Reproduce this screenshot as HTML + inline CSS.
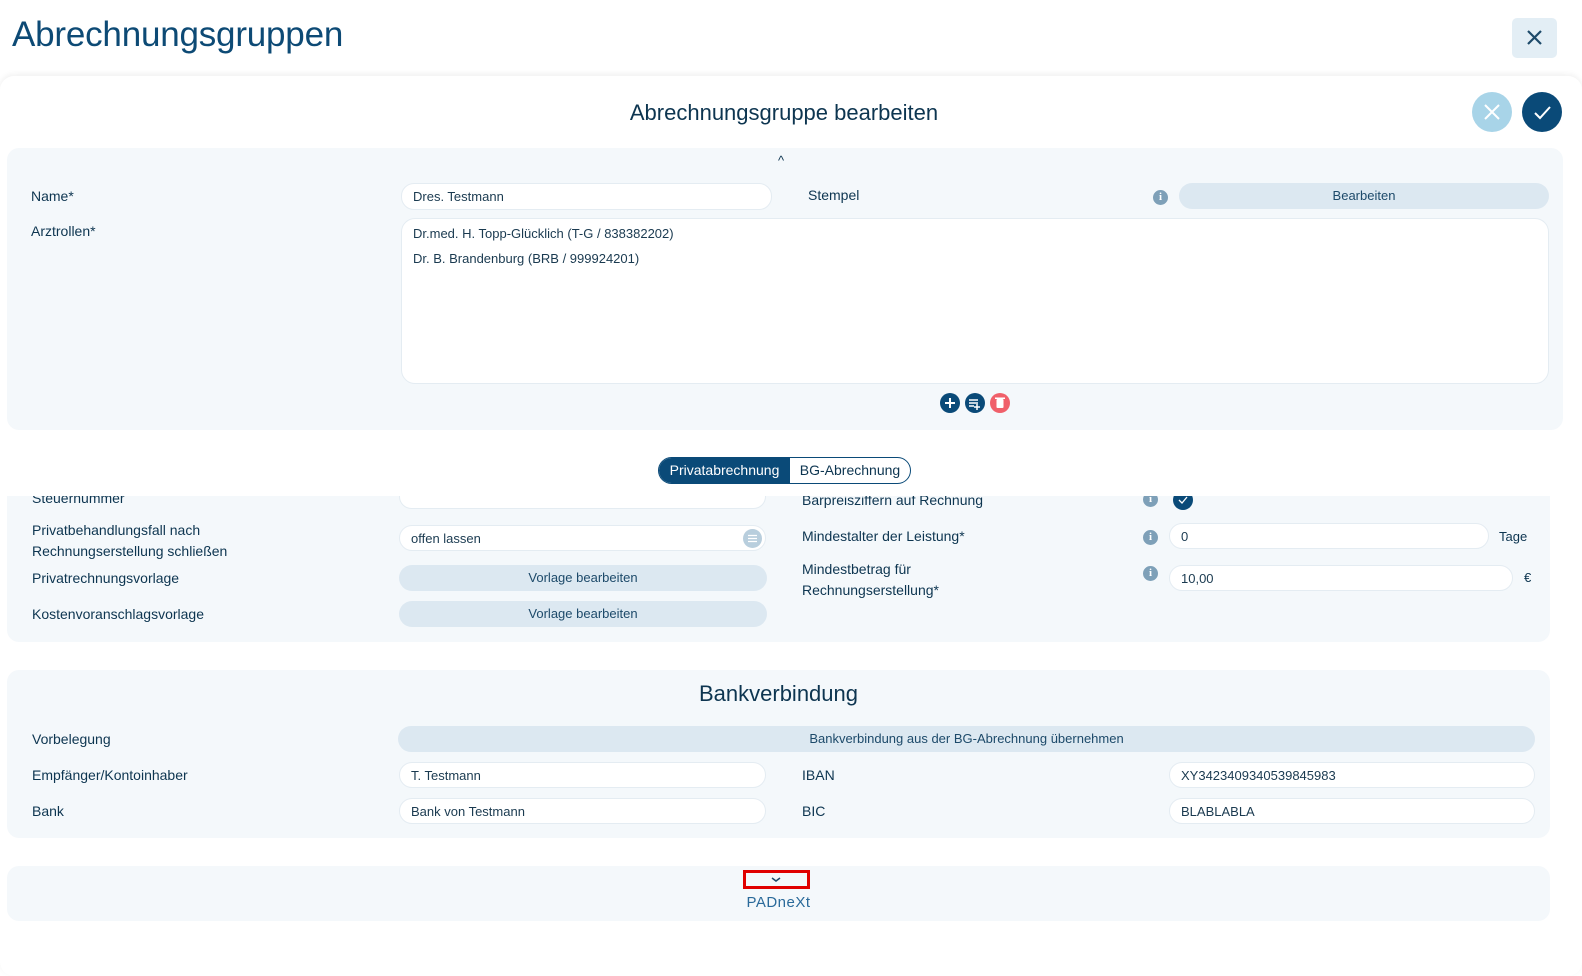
<!DOCTYPE html>
<html><head><meta charset="utf-8"><style>
*{box-sizing:border-box;margin:0;padding:0}
body{width:1582px;height:948px;background:#fff;font-family:"Liberation Sans",sans-serif;color:#0d3550;position:relative;overflow:hidden;font-size:14px}
.a{position:absolute}
.h1{left:12px;top:15px;font-size:35px;color:#0d4a75;letter-spacing:-0.2px}
.close{left:1512px;top:18px;width:45px;height:40px;background:#e3eef5;border-radius:5px}
.card{left:0;top:76px;width:1582px;height:900px;border-radius:14px;box-shadow:0 -2px 6px rgba(0,0,0,.06)}
.panel{background:#f4f8fb;border-radius:12px}
.inp{background:#fff;border:1px solid #e4ecf2;border-radius:13px;font-size:13px;padding-left:11px;line-height:25px;color:#1a3a50}
.btn{background:#dce8f1;border-radius:13px;font-size:13px;text-align:center;line-height:26px;color:#1d4a6a}
.lbl{font-size:14px;color:#0d3550}
.info{width:15px;height:15px;border-radius:50%;background:#7ea0b8;color:#fff;font-size:11px;font-weight:bold;text-align:center;line-height:15px;font-family:"Liberation Serif",serif}
</style></head><body>
<div class="a h1">Abrechnungsgruppen</div>
<div class="a close"><svg width="45" height="40"><path d="M16 13l13 13M29 13L16 26" stroke="#1d4a6a" stroke-width="2.2"/></svg></div>
<div class="a card"></div>
<div class="a" style="left:0;top:100px;width:1568px;text-align:center;font-size:22px;color:#0d3550;font-weight:300">Abrechnungsgruppe bearbeiten</div>
<div class="a" style="left:1472px;top:92px;width:40px;height:40px;border-radius:50%;background:#a8d4e8"><svg width="40" height="40"><path d="M13 13l14 14M27 13L13 27" stroke="#fff" stroke-width="2"/></svg></div>
<div class="a" style="left:1522px;top:92px;width:40px;height:40px;border-radius:50%;background:#0a4a78"><svg width="40" height="40"><path d="M13 21l5 5 10-11" stroke="#fff" stroke-width="2" fill="none"/></svg></div>

<div class="a panel" style="left:7px;top:148px;width:1556px;height:282px"></div>
<div class="a" style="left:778px;top:153px;font-size:13px">^</div>
<div class="a lbl" style="left:31px;top:188px">Name*</div>
<div class="a inp" style="left:401px;top:183px;width:371px;height:27px">Dres. Testmann</div>
<div class="a lbl" style="left:808px;top:187px">Stempel</div>
<div class="a info" style="left:1153px;top:190px">i</div>
<div class="a btn" style="left:1179px;top:183px;width:370px;height:26px">Bearbeiten</div>
<div class="a lbl" style="left:31px;top:223px">Arztrollen*</div>
<div class="a inp" style="left:401px;top:218px;width:1148px;height:166px;border-radius:14px;padding-top:2px">Dr.med. H. Topp-Glücklich (T-G / 838382202)<br>Dr. B. Brandenburg (BRB / 999924201)</div>
<svg class="a" style="left:940px;top:393px" width="72" height="21">
<circle cx="10" cy="10" r="10" fill="#0a4a78"/><path d="M10 5v10M5 10h10" stroke="#fff" stroke-width="2"/>
<circle cx="35" cy="10" r="10" fill="#0a4a78"/><path d="M29 7h9M29 10h9M29 13h5M37 11v6M34 14h6" stroke="#fff" stroke-width="1.5"/>
<circle cx="60" cy="10" r="10" fill="#f0606a"/><rect x="56.5" y="6" width="7" height="9" rx="1" fill="#fff"/><rect x="55" y="4.5" width="10" height="1.5" fill="#fff"/>
</svg>

<div class="a panel" style="left:7px;top:470px;width:1543px;height:172px"></div>
<div class="a lbl" style="left:32px;top:490px">Steuernummer</div>
<div class="a inp" style="left:399px;top:484px;width:367px;height:25px"></div>
<div class="a lbl" style="left:802px;top:492px">Barpreisziffern auf Rechnung</div>
<div class="a info" style="left:1143px;top:492px">i</div>
<div class="a" style="left:1173px;top:490px;width:20px;height:20px;border-radius:50%;background:#0a4a78"><svg width="20" height="20"><path d="M6 10l3 3 5-6" stroke="#fff" stroke-width="1.3" fill="none"/></svg></div>
<div class="a" style="left:0;top:430px;width:1582px;height:66px;background:#fff"></div>
<div class="a" style="left:658px;top:457px;width:253px;height:27px;border:1px solid #0a4a78;border-radius:14px;background:#fff;overflow:hidden;font-size:14px;line-height:25px">
<span class="a" style="left:0;top:0;width:131px;height:25px;background:#0a4a78;color:#fff;text-align:center">Privatabrechnung</span>
<span class="a" style="left:131px;top:0;width:120px;text-align:center;color:#0d3550">BG-Abrechnung</span></div>
<div class="a lbl" style="left:32px;top:520px;line-height:21px">Privatbehandlungsfall nach<br>Rechnungserstellung schließen</div>
<div class="a inp" style="left:399px;top:525px;width:367px;height:26px">offen lassen</div>
<div class="a" style="left:743px;top:529px;width:19px;height:19px;border-radius:50%;background:#b8cedd"><svg width="19" height="19"><path d="M5 6.5h9M5 9.5h9M5 12.5h9" stroke="#fff" stroke-width="1.3"/></svg></div>
<div class="a lbl" style="left:32px;top:570px">Privatrechnungsvorlage</div>
<div class="a btn" style="left:399px;top:565px;width:368px;height:26px">Vorlage bearbeiten</div>
<div class="a lbl" style="left:32px;top:606px">Kostenvoranschlagsvorlage</div>
<div class="a btn" style="left:399px;top:601px;width:368px;height:26px">Vorlage bearbeiten</div>
<div class="a lbl" style="left:802px;top:528px">Mindestalter der Leistung*</div>
<div class="a info" style="left:1143px;top:530px">i</div>
<div class="a inp" style="left:1169px;top:523px;width:320px;height:26px">0</div>
<div class="a" style="left:1499px;top:529px;font-size:13px">Tage</div>
<div class="a lbl" style="left:802px;top:559px;line-height:21px">Mindestbetrag für<br>Rechnungserstellung*</div>
<div class="a info" style="left:1143px;top:566px">i</div>
<div class="a inp" style="left:1169px;top:565px;width:344px;height:26px">10,00</div>
<div class="a" style="left:1524px;top:570px;font-size:13px">€</div>

<div class="a panel" style="left:7px;top:670px;width:1543px;height:168px"></div>
<div class="a" style="left:7px;top:681px;width:1543px;text-align:center;font-size:22px;font-weight:300">Bankverbindung</div>
<div class="a lbl" style="left:32px;top:731px">Vorbelegung</div>
<div class="a btn" style="left:398px;top:726px;width:1137px;height:26px">Bankverbindung aus der BG-Abrechnung übernehmen</div>
<div class="a lbl" style="left:32px;top:767px">Empfänger/Kontoinhaber</div>
<div class="a inp" style="left:399px;top:762px;width:367px;height:26px">T. Testmann</div>
<div class="a lbl" style="left:802px;top:767px">IBAN</div>
<div class="a inp" style="left:1169px;top:762px;width:366px;height:26px">XY3423409340539845983</div>
<div class="a lbl" style="left:32px;top:803px">Bank</div>
<div class="a inp" style="left:399px;top:798px;width:367px;height:26px">Bank von Testmann</div>
<div class="a lbl" style="left:802px;top:803px">BIC</div>
<div class="a inp" style="left:1169px;top:798px;width:366px;height:26px">BLABLABLA</div>

<div class="a panel" style="left:7px;top:866px;width:1543px;height:55px"></div>
<div class="a" style="left:743px;top:870px;width:67px;height:19px;border:3px solid #e00000"><svg width="61" height="13"><path d="M32 5l4 3 4-3" stroke="#1d4a6a" stroke-width="1.5" fill="none" transform="translate(-6,0)"/></svg></div>
<div class="a" style="left:7px;top:894px;width:1543px;text-align:center;font-size:15px;color:#2a6a9a;letter-spacing:0.5px">PADneXt</div>
</body></html>
